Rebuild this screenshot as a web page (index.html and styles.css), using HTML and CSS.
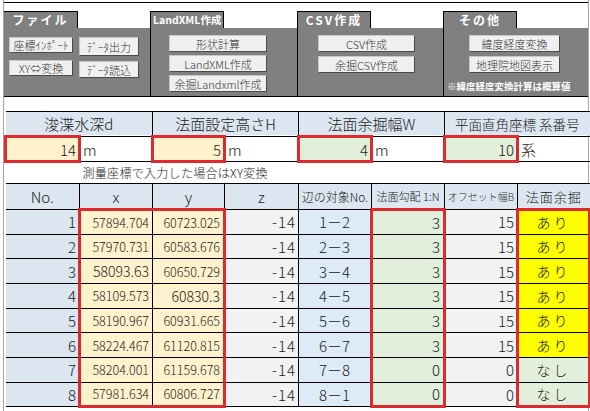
FILE: index.html
```html
<!DOCTYPE html>
<html lang="ja">
<head>
    <meta charset="UTF-8">
    <title>浚渫 法面計算</title>
    <link rel="stylesheet" href="styles.css">
</head>
<body>
    <div class="sheet">
        <div class="topline"></div>

        <div class="toolbar">
            <div class="group">
                <div class="tab">ファイル</div>
                <div class="panel panel-file">
                    <button class="btn b-imp">座標ｲﾝﾎﾟｰﾄ</button>
                    <button class="btn b-out">ﾃﾞｰﾀ出力</button>
                    <button class="btn b-imp">XY⇔変換</button>
                    <button class="btn b-in">ﾃﾞｰﾀ読込</button>
                </div>
            </div>
            <div class="group">
                <div class="tab tab-small">LandXML作成</div>
                <div class="panel panel-xml">
                    <button class="btn">形状計算</button>
                    <button class="btn">LandXML作成</button>
                    <button class="btn btn-last">余掘Landxml作成</button>
                </div>
            </div>
            <div class="group">
                <div class="tab">CSV作成</div>
                <div class="panel panel-csv">
                    <button class="btn">CSV作成</button>
                    <button class="btn">余掘CSV作成</button>
                </div>
            </div>
            <div class="group">
                <div class="tab">その他</div>
                <div class="panel panel-etc">
                    <button class="btn">緯度経度変換</button>
                    <button class="btn">地理院地図表示</button>
                    <div class="panel-note">※緯度経度変換計算は概算値</div>
                </div>
            </div>
        </div>

        <table class="grid">
            <colgroup>
                <col style="width:74px">
                <col style="width:73px">
                <col style="width:72px">
                <col style="width:74px">
                <col style="width:73px">
                <col style="width:73px">
                <col style="width:73px">
                <col style="width:72px">
            </colgroup>
            <tr class="param-head">
                <th colspan="2" class="first">浚渫水深d</th>
                <th colspan="2">法面設定高さH</th>
                <th colspan="2">法面余掘幅W</th>
                <th colspan="2" class="last small">平面直角座標 系番号</th>
            </tr>
            <tr class="param-input">
                <td class="in beige first">14</td>
                <td class="unit">m</td>
                <td class="in beige">5</td>
                <td class="unit">m</td>
                <td class="in green">4</td>
                <td class="unit">m</td>
                <td class="in green">10</td>
                <td class="unit last">系</td>
            </tr>
            <tr class="note">
                <td colspan="8" class="first last">測量座標で入力した場合はXY変換</td>
            </tr>
            <tr class="head">
                <th class="first">No.</th>
                <th>x</th>
                <th>y</th>
                <th>z</th>
                <th class="h-edge">辺の対象No.</th>
                <th class="h-slope">法面勾配 1:N</th>
                <th class="h-off">オフセット幅B</th>
                <th class="h-yo last">法面余掘</th>
            </tr>
            <tr class="row top">
                <td class="no first">1</td><td class="xv">57894.704</td><td class="yv">60723.025</td><td class="z">-14</td>
                <td class="edge">1－2</td><td class="slope">3</td><td class="off">15</td><td class="yo ari last">あり</td>
            </tr>
            <tr class="row">
                <td class="no first">2</td><td class="xv">57970.731</td><td class="yv">60583.676</td><td class="z">-14</td>
                <td class="edge">2－3</td><td class="slope">3</td><td class="off">15</td><td class="yo ari last">あり</td>
            </tr>
            <tr class="row">
                <td class="no first">3</td><td class="xv big">58093.63</td><td class="yv">60650.729</td><td class="z">-14</td>
                <td class="edge">3－4</td><td class="slope">3</td><td class="off">15</td><td class="yo ari last">あり</td>
            </tr>
            <tr class="row">
                <td class="no first">4</td><td class="xv">58109.573</td><td class="yv big">60830.3</td><td class="z">-14</td>
                <td class="edge">4－5</td><td class="slope">3</td><td class="off">15</td><td class="yo ari last">あり</td>
            </tr>
            <tr class="row">
                <td class="no first">5</td><td class="xv">58190.967</td><td class="yv">60931.665</td><td class="z">-14</td>
                <td class="edge">5－6</td><td class="slope">3</td><td class="off">15</td><td class="yo ari last">あり</td>
            </tr>
            <tr class="row">
                <td class="no first">6</td><td class="xv">58224.467</td><td class="yv">61120.815</td><td class="z">-14</td>
                <td class="edge">6－7</td><td class="slope">3</td><td class="off">15</td><td class="yo ari last">あり</td>
            </tr>
            <tr class="row">
                <td class="no first">7</td><td class="xv">58204.001</td><td class="yv">61159.678</td><td class="z">-14</td>
                <td class="edge">7－8</td><td class="slope">0</td><td class="off">0</td><td class="yo nashi last">なし</td>
            </tr>
            <tr class="row bottom">
                <td class="no first">8</td><td class="xv">57981.634</td><td class="yv">60806.727</td><td class="z">-14</td>
                <td class="edge">8－1</td><td class="slope">0</td><td class="off">0</td><td class="yo nashi last">なし</td>
            </tr>
        </table>
    </div>
</body>
</html>
```

FILE: styles.css
```css
body {
    margin: 0;
    background: #fff;
    color: #1a1a1a;
    font-family: "Noto Sans CJK JP", "Noto Sans", sans-serif;
    font-weight: 300;
    overflow: hidden;
}

.sheet {
    margin-left: 3px;
    width: 584px;
    height: 411px;
    padding-top: 2px;
    border-left: 1px solid #a6a6a6;
    border-right: 1px solid #a6a6a6;
}

.topline {
    height: 1px;
    background: #000;
}

/* ツールバー */
.toolbar {
    display: grid;
    grid-template-columns: 146px 147px 146px 145px;
    margin-top: 8px;
    margin-bottom: 14px;
}

.group {
    display: flex;
    flex-direction: column;
}

.tab {
    width: 74px;
    height: 17px;
    box-sizing: border-box;
    background: #808080;
    color: #fff;
    font-size: 12px;
    font-weight: bold;
    line-height: 15px;
    letter-spacing: 2px;
    text-align: center;
    white-space: nowrap;
    border-top: 1px solid #000;
    border-right: 1px solid #000;
}

.tab-small {
    font-size: 10.5px;
    letter-spacing: 0;
    text-align: left;
    padding-left: 2px;
}

.group + .group .tab,
.group + .group .panel {
    border-left: 1px solid #000;
}

.panel {
    height: 69px;
    box-sizing: border-box;
    background: #808080;
    border-bottom: 1px solid #000;
}

.btn {
    display: block;
    height: 17px;
    padding: 0;
    box-sizing: border-box;
    background: #f0f0f0;
    border: 1px solid #c8c8c8;
    border-right-color: #4a4a4a;
    border-bottom-color: #4a4a4a;
    color: #333;
    font-family: inherit;
    font-weight: 300;
    font-size: 11px;
    line-height: 14px;
    white-space: nowrap;
}

.panel-file {
    display: grid;
    grid-template-columns: 64px 60px;
    grid-auto-rows: 16px;
    column-gap: 6px;
    row-gap: 7px;
    padding: 9px 0 0 5px;
}

.panel-file .btn {
    width: 100%;
    height: 16px;
}

.panel-file .b-out {
    height: 19px;
}

.panel-file .b-in {
    height: 17px;
    margin-top: 1px;
}

.panel-xml {
    padding: 7px 0 0 18px;
}

.panel-xml .btn {
    width: 98px;
    margin-bottom: 3px;
}

.panel-xml .btn-last {
    margin-top: 1px;
}

.panel-csv {
    padding: 7px 0 0 20px;
}

.panel-csv .btn {
    width: 97px;
    margin-bottom: 4px;
}

.panel-etc {
    padding: 7px 0 0 0;
}

.panel-etc .btn {
    width: 91px;
    margin: 0 0 4px 25px;
}

.panel-note {
    margin: 8px 0 0 3px;
    color: #fff;
    font-size: 9.5px;
    font-weight: bold;
    line-height: 11px;
    white-space: nowrap;
}

/* 表 */
.grid {
    width: 584px;
    table-layout: fixed;
    border-collapse: collapse;
}

.grid th,
.grid td {
    border: 1px solid #000;
    padding: 0 3px;
    font-weight: 300;
    white-space: nowrap;
    overflow: hidden;
}

.grid .first {
    border-left: none;
}

.grid .last {
    border-right: none;
}

.param-head th {
    height: 23px;
    background: #dce6f1;
    font-size: 15px;
    text-align: center;
}

.param-head th.small {
    font-size: 13.5px;
}

.param-input td {
    height: 22px;
    font-size: 15px;
}

.param-input .in {
    text-align: right;
    border: 3px solid #dc2a30;
    padding-right: 2px;
}

.param-input .unit {
    text-align: left;
    padding-left: 2px;
    border-left: none;
    border-right: none;
}

.beige {
    background: #fff2cc;
}

.green {
    background: #e2efda;
}

.note td {
    height: 20px;
    padding-left: 77px;
    font-size: 12px;
    letter-spacing: 0.3px;
    line-height: 14px;
}

.head th {
    height: 24px;
    background: #dce6f1;
    font-size: 15px;
    text-align: center;
}

.head .h-edge {
    font-size: 12px;
    padding: 0;
}

.head .h-slope {
    font-size: 11px;
    padding: 0;
}

.head .h-off {
    font-size: 10px;
    padding: 0;
    color: #333;
}

.head .h-yo {
    font-size: 13px;
    letter-spacing: 1px;
}

.row td {
    height: 23.7px;
    font-size: 15px;
    text-align: right;
}

.row.top td {
    height: 22.5px;
}

.row.bottom td {
    height: 22.5px;
}

.row .no {
    background: #dce6f1;
    padding-right: 2px;
}

.row .xv,
.row .yv {
    background: #fff2cc;
    font-size: 12.5px;
    padding-right: 3px;
}

.row .big {
    font-size: 14px;
}

.row .xv {
    border-left: 3px solid #dc2a30;
}

.row .yv {
    border-right: 3px solid #dc2a30;
}

.row .z {
    background: #f2f2f2;
    letter-spacing: 1px;
    padding-right: 2px;
}

.row .edge {
    background: #ddebf7;
    text-align: center;
}

.row .slope {
    background: #e2efda;
    border-left: 3px solid #dc2a30;
    border-right: 3px solid #dc2a30;
}

.row .off {
    background: #f2f2f2;
    padding-right: 2px;
}

.row .yo {
    text-align: center;
    font-size: 14px;
    letter-spacing: 3px;
    border-left: 3px solid #dc2a30;
    border-right: 3px solid #dc2a30;
}

.row .ari {
    background: #ffff00;
}

.row .nashi {
    background: #e2efda;
}

.top .xv,
.top .yv,
.top .slope,
.top .yo {
    border-top: 3px solid #dc2a30;
}

.bottom .xv,
.bottom .yv,
.bottom .slope,
.bottom .yo {
    border-bottom: 3px solid #dc2a30;
}
```
